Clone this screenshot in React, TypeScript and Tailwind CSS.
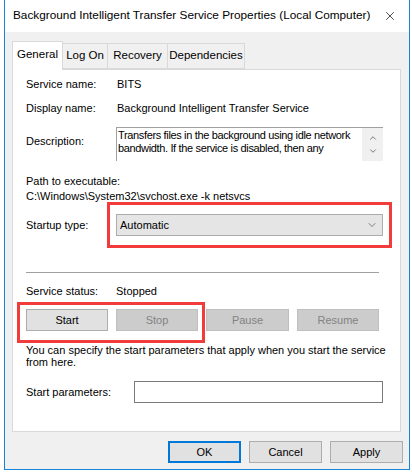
import { X, ChevronDown, ChevronUp } from "lucide-react";

const sans = { fontFamily: '"Liberation Sans", Arial, sans-serif' };

function Btn({ label, disabled, primary, w }: { label: string; disabled?: boolean; primary?: boolean; w: string }) {
  return (
    <div
      className={`${w} h-[22px] flex items-center justify-center text-[11px] border ${
        primary
          ? "border-2 border-[#0078d7] bg-[#e1e1e1] text-black"
          : disabled
          ? "border-[#bfbfbf] bg-[#cccccc] text-[#838383]"
          : "border-[#adadad] bg-[#e1e1e1] text-black"
      }`}
    >
      {label}
    </div>
  );
}

export default function App() {
  return (
    <div className="w-[412px] h-[474px] bg-white text-black" style={sans}>
      <div className="ml-[4px] w-[406px] h-[470px] border-l border-r border-b border-[#1883d7] bg-[#f0f0f0] flex flex-col">
        {/* title bar */}
        <div className="h-[32px] bg-white flex items-center justify-between pl-[8px] pr-[12px] shrink-0">
          <span className="text-[11.8px] whitespace-nowrap text-black">
            Background Intelligent Transfer Service Properties (Local Computer)
          </span>
          <X className="h-[14px] w-[14px] text-black" strokeWidth={1.2} />
        </div>

        {/* tabs */}
        <div className="mt-[9px] ml-[7px] flex items-end h-[28px] text-[11.5px] relative z-10">
          <div className="h-[29px] w-[51px] bg-white border border-b-0 border-[#d9d9d9] flex items-center justify-center -mb-[1px] pb-[2px]">
            General
          </div>
          <div className="h-[26px] w-[45px] border border-l-0 border-[#d9d9d9] flex items-center justify-center">Log On</div>
          <div className="h-[26px] w-[60px] border border-l-0 border-[#d9d9d9] flex items-center justify-center">Recovery</div>
          <div className="h-[26px] w-[77px] border border-l-0 border-[#d9d9d9] flex items-center justify-center">Dependencies</div>
        </div>

        {/* panel */}
        <div className="ml-[7px] w-[389px] h-[363px] bg-white border border-[#d9d9d9] relative text-[11px] pl-[13px]">
          <div className="mt-[6px] h-[16px] flex items-center">
            <span className="w-[91px]">Service name:</span>
            <span>BITS</span>
          </div>
          <div className="mt-[8px] h-[16px] flex items-center">
            <span className="w-[91px]">Display name:</span>
            <span>Background Intelligent Transfer Service</span>
          </div>
          <div className="mt-[11px] flex items-start">
            <span className="w-[90px] pt-[6px]">Description:</span>
            <div className="w-[267px] h-[34px] border-t border-l border-[#a0a0a0] flex overflow-hidden">
              <div className="flex-1 leading-[13px] pl-[1px] pt-[1px] tracking-[-0.35px] overflow-hidden">
                Transfers files in the background using idle network bandwidth. If the service is disabled, then any
              </div>
              <div className="w-[21px] shrink-0 bg-[#f0f0f0] flex flex-col items-center justify-center gap-[3px] text-[#606060]">
                <ChevronUp className="h-[10px] w-[10px]" strokeWidth={2} />
                <ChevronDown className="h-[10px] w-[10px]" strokeWidth={2} />
              </div>
            </div>
          </div>
          <div className="mt-[13px] h-[15px] flex items-center">Path to executable:</div>
          <div className="h-[15px] flex items-center">C:\Windows\System32\svchost.exe -k netsvcs</div>
          <div className="mt-[10px] flex items-center">
            <span className="w-[90px]">Startup type:</span>
            <div className="w-[267px] h-[22px] bg-[#e5e5e5] border border-[#acacac] flex items-center justify-between pl-[3px] pr-[4px]">
              <span>Automatic</span>
              <ChevronDown className="h-[12px] w-[12px] text-[#444]" strokeWidth={1.3} />
            </div>
          </div>
          <div className="mt-[36px] w-[353px] h-px bg-[#a0a0a0]" />
          <div className="mt-[11px] h-[14px] flex items-center">
            <span className="w-[90px]">Service status:</span>
            <span>Stopped</span>
          </div>
          <div className="mt-[11px] flex gap-[8px]">
            <Btn label="Start" w="w-[82px]" />
            <Btn label="Stop" w="w-[82px]" disabled />
            <Btn label="Pause" w="w-[83px]" disabled />
            <Btn label="Resume" w="w-[82px]" disabled />
          </div>
          <div className="mt-[13px] leading-[12px] w-[360px]">
            You can specify the start parameters that apply when you start the service from here.
          </div>
          <div className="mt-[13px] flex items-center">
            <span className="w-[108px]">Start parameters:</span>
            <div className="w-[249px] h-[22px] border border-[#7a7a7a] bg-white" />
          </div>

          {/* highlight boxes */}
          <div className="absolute left-[94px] top-[132px] w-[285px] h-[46px] border-[3px] border-[#f23b3b]" />
          <div className="absolute left-[4px] top-[232px] w-[188px] h-[41px] border-[3px] border-[#f23b3b]" />
        </div>

        {/* bottom buttons */}
        <div className="mt-[9px] flex justify-end gap-[8px] pr-[6px]">
          <Btn label="OK" w="w-[73px]" primary />
          <Btn label="Cancel" w="w-[73px]" />
          <Btn label="Apply" w="w-[73px]" />
        </div>
      </div>
    </div>
  );
}
